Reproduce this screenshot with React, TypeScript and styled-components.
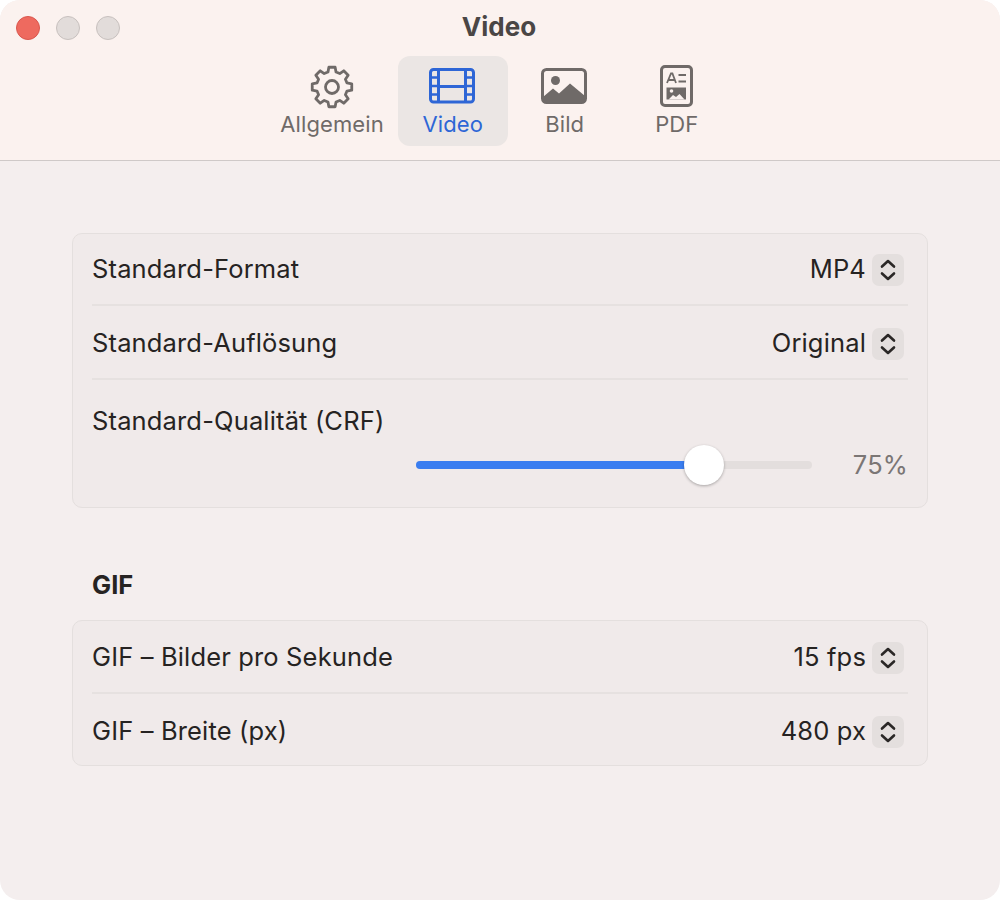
import React from "react";
import styled, { createGlobalStyle } from "styled-components";

const Global = createGlobalStyle`
  html, body { margin: 0; padding: 0; background: #fff; }
  body { font-family: Inter, "Noto Sans", "Liberation Sans", sans-serif; }
`;

const Window = styled.div`
  width: 1000px;
  height: 900px;
  background: #f4eeee;
  border-radius: 20px;
  overflow: hidden;
  display: flex;
  flex-direction: column;
`;

const TitleBar = styled.header`
  height: 160px;
  box-sizing: content-box;
  background: #fbf2ef;
  border-bottom: 1px solid #cfc9c8;
  display: flex;
  flex-direction: column;
  align-items: center;
  position: relative;
  flex: none;
`;

const Lights = styled.div`
  position: absolute;
  left: 16px;
  top: 16px;
  display: flex;
  gap: 16px;
`;

const Light = styled.span<{ $red?: boolean }>`
  width: 24px;
  height: 24px;
  box-sizing: border-box;
  border-radius: 50%;
  background: ${(p) => (p.$red ? "#ee6a5f" : "#e2dcda")};
  border: 1px solid ${(p) => (p.$red ? "#d9574e" : "#c7c0be")};
`;

const Title = styled.h1`
  margin: 0;
  height: 56px;
  padding-top: 12px;
  padding-right: 2px;
  box-sizing: border-box;
  font-size: 26px;
  line-height: 30px;
  font-weight: 700;
  color: #4a4645;
`;

const Tabs = styled.nav`
  display: flex;
  gap: 2px;
`;

const Tab = styled.div<{ $active?: boolean }>`
  min-width: 110px;
  height: 90px;
  padding: 0 12px;
  box-sizing: border-box;
  border-radius: 12px;
  display: flex;
  flex-direction: column;
  align-items: center;
  background: ${(p) => (p.$active ? "#ebe6e4" : "transparent")};
  color: ${(p) => (p.$active ? "#2e66d6" : "#6f6a68")};
`;

const TabIcon = styled.svg`
  width: 50px;
  height: 46px;
  margin-top: 8px;
  flex: none;
`;

const TabLabel = styled.span`
  font-size: 22px;
  line-height: 28px;
  letter-spacing: 0.1px;
  white-space: nowrap;
`;

const Content = styled.main`
  padding: 72px 72px 0;
  display: flex;
  flex-direction: column;
`;

const Panel = styled.section<{ $inset?: number }>`
  background: #f0eaea;
  border: 1px solid #e4dfde;
  border-radius: 10px;
  padding: ${(p) => p.$inset ?? 0}px 19px 0;
`;

const Row = styled.div`
  padding-top: 2px;
  display: flex;
  align-items: center;
  justify-content: space-between;
  border-bottom: 2px solid #e6e1e0;
  box-sizing: content-box;
  height: 70px;
  &:first-child {
    padding-top: 0;
  }
  &:last-child {
    border-bottom: none;
    height: 68px;
    padding-top: 3px;
  }
`;

const Label = styled.span`
  font-size: 25.5px;
  line-height: 30px;
  color: #262322;
  letter-spacing: 0.15px;
`;

const Picker = styled.div`
  display: flex;
  align-items: center;
  gap: 6px;
  margin-right: 4px;
`;

const Value = styled.span`
  font-size: 25.5px;
  line-height: 30px;
  letter-spacing: 0.15px;
  color: #262322;
`;

const Stepper = styled.span`
  width: 32px;
  height: 32px;
  margin-top: 2px;
  border-radius: 7px;
  background: #e4dfde;
  display: flex;
  align-items: center;
  justify-content: center;
  color: #2a2726;
`;

const SliderRow = styled.div`
  height: 127px;
  display: flex;
  flex-direction: column;
  padding-top: 26px;
  box-sizing: border-box;
`;

const SliderLine = styled.div`
  display: flex;
  align-items: center;
  justify-content: flex-end;
  margin-top: 14px;
`;

const Track = styled.div`
  width: 396px;
  height: 8px;
  border-radius: 4px;
  background: #e3dedd;
  position: relative;
  margin-right: 41px;
`;

const Fill = styled.div`
  height: 100%;
  border-radius: 4px;
  background: #3a7df0;
`;

const Knob = styled.span`
  position: absolute;
  top: -16px;
  width: 40px;
  height: 40px;
  margin-left: -20px;
  border-radius: 50%;
  background: #fff;
  box-shadow: 0 1px 3px rgba(0, 0, 0, 0.3);
`;

const Percent = styled.span`
  font-size: 25.5px;
  line-height: 30px;
  letter-spacing: 0.15px;
  color: #7b7675;
`;

const SectionTitle = styled.h2`
  margin: 0;
  padding: 62px 20px 20px;
  font-size: 25.5px;
  line-height: 30px;
  font-weight: 700;
  color: #262322;
`;

const Chevrons = () => (
  <svg width="18" height="24" viewBox="0 0 18 24" fill="none" stroke="currentColor" strokeWidth="2.6" strokeLinecap="round" strokeLinejoin="round">
    <path d="M3 8.5 9 3l6 5.5" />
    <path d="M3 15.5 9 21l6-5.5" />
  </svg>
);

const gearTeeth = Array.from({ length: 8 }, (_, i) => i * 45);

const Gear = () => {
  const pts: string[] = [];
  const cx = 25, cy = 23, ro = 20, ri = 15.5;
  gearTeeth.forEach((deg) => {
    const at = (a: number, r: number) => {
      const t = ((deg + a - 90) * Math.PI) / 180;
      return `${(cx + r * Math.cos(t)).toFixed(2)} ${(cy + r * Math.sin(t)).toFixed(2)}`;
    };
    pts.push(`${at(-15, ri)}`, `${at(-9, ro)}`, `${at(9, ro)}`, `${at(15, ri)}`);
  });
  return (
    <TabIcon viewBox="0 0 50 46" fill="none" stroke="currentColor" strokeWidth="2.8" strokeLinejoin="round">
      <path d={`M${pts.join("L")}Z`} />
      <circle cx={cx} cy={cy} r="6.5" />
    </TabIcon>
  );
};

const Film = () => (
  <TabIcon viewBox="0 0 50 46">
    <g fill="none" stroke="currentColor" strokeWidth="3">
      <rect x="2.5" y="5.5" width="43" height="32.5" rx="3" />
      <path d="M10.5 5.5v32.5M37.5 5.5v32.5M10.5 22.5h27" />
      <path d="M2.5 13.5h8M2.5 22h8M2.5 30.5h8M37.5 13.5h8M37.5 22h8M37.5 30.5h8" strokeWidth="2.4" />
    </g>
  </TabIcon>
);

const Photo = () => (
  <TabIcon viewBox="0 0 50 46">
    <rect x="2.5" y="5.5" width="43" height="33" rx="4" fill="none" stroke="currentColor" strokeWidth="3" />
    <circle cx="15.5" cy="16.5" r="4.5" fill="currentColor" />
    <path d="M3 33 13 24.5l6 5L30 19.5 45 32v3a3.5 3.5 0 0 1-3.5 3.5H6A3.5 3.5 0 0 1 3 35Z" fill="currentColor" />
  </TabIcon>
);

const Doc = () => (
  <TabIcon viewBox="0 0 50 46">
    <rect x="9.5" y="2.5" width="30" height="39" rx="3.5" fill="none" stroke="currentColor" strokeWidth="3" />
    <path d="M15 19 19 9.5h1.4L24 19M16.3 16h6.8" fill="none" stroke="currentColor" strokeWidth="1.8" />
    <path d="M26.5 11h7.5M26.5 17.5h7.5" stroke="currentColor" strokeWidth="2" />
    <path d="M14.5 23.5h19.5v12h-19.5Z" fill="currentColor" />
    <circle cx="19.5" cy="27" r="1.8" fill="#fbf2ef" />
    <path d="M16.5 35.5 21 31l3 2 3.5-3 5 5.5Z" fill="#fbf2ef" />
  </TabIcon>
);

export default function App() {
  return (
    <Window>
      <Global />
      <TitleBar>
        <Lights>
          <Light $red />
          <Light />
          <Light />
        </Lights>
        <Title>Video</Title>
        <Tabs>
          <Tab>
            <Gear />
            <TabLabel>Allgemein</TabLabel>
          </Tab>
          <Tab $active>
            <Film />
            <TabLabel>Video</TabLabel>
          </Tab>
          <Tab>
            <Photo />
            <TabLabel>Bild</TabLabel>
          </Tab>
          <Tab>
            <Doc />
            <TabLabel>PDF</TabLabel>
          </Tab>
        </Tabs>
      </TitleBar>
      <Content>
        <Panel>
          <Row>
            <Label>Standard-Format</Label>
            <Picker>
              <Value>MP4</Value>
              <Stepper><Chevrons /></Stepper>
            </Picker>
          </Row>
          <Row>
            <Label>Standard-Auflösung</Label>
            <Picker>
              <Value>Original</Value>
              <Stepper><Chevrons /></Stepper>
            </Picker>
          </Row>
          <SliderRow>
            <Label>Standard-Qualität (CRF)</Label>
            <SliderLine>
              <Track>
                <Fill style={{ width: "72.7%" }} />
                <Knob style={{ left: "72.7%" }} />
              </Track>
              <Percent>75%</Percent>
            </SliderLine>
          </SliderRow>
        </Panel>
        <SectionTitle>GIF</SectionTitle>
        <Panel $inset={1}>
          <Row>
            <Label>GIF – Bilder pro Sekunde</Label>
            <Picker>
              <Value>15 fps</Value>
              <Stepper><Chevrons /></Stepper>
            </Picker>
          </Row>
          <Row>
            <Label>GIF – Breite (px)</Label>
            <Picker>
              <Value>480 px</Value>
              <Stepper><Chevrons /></Stepper>
            </Picker>
          </Row>
        </Panel>
      </Content>
    </Window>
  );
}
